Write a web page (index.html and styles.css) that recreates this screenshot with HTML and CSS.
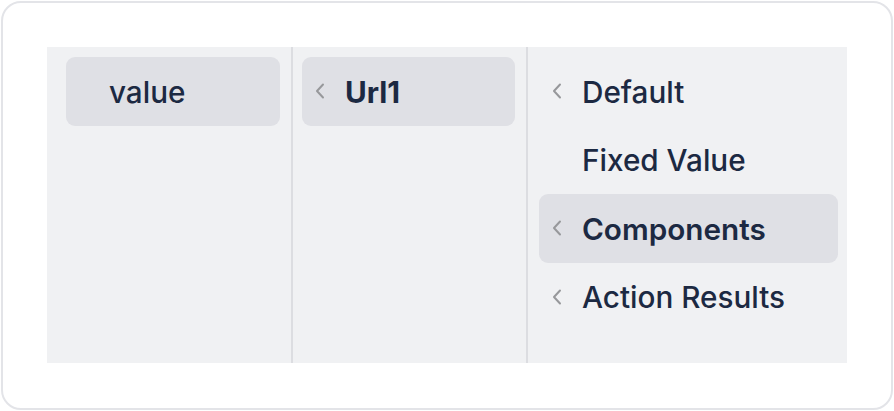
FILE: index.html
```html
<!DOCTYPE html>
<html>
<head>
<meta charset="utf-8">
<link rel="stylesheet" href="styles.css">
</head>
<body>
<div class="card">
  <div class="panel">
    <div class="col col1">
      <div class="item active"><span class="label">value</span></div>
    </div>
    <div class="col col2">
      <div class="item active"><span class="chev"><svg viewBox="0 0 12 18" width="12" height="18"><path d="M9 2.5 L3 9 L9 15.5" fill="none" stroke="currentColor" stroke-width="2" stroke-linecap="round" stroke-linejoin="round"/></svg></span><span class="label heavy">Url1</span></div>
    </div>
    <div class="col col3">
      <div class="item"><span class="chev"><svg viewBox="0 0 12 18" width="12" height="18"><path d="M9 2.5 L3 9 L9 15.5" fill="none" stroke="currentColor" stroke-width="2" stroke-linecap="round" stroke-linejoin="round"/></svg></span><span class="label">Default</span></div>
      <div class="item"><span class="label">Fixed Value</span></div>
      <div class="item active"><span class="chev"><svg viewBox="0 0 12 18" width="12" height="18"><path d="M9 2.5 L3 9 L9 15.5" fill="none" stroke="currentColor" stroke-width="2" stroke-linecap="round" stroke-linejoin="round"/></svg></span><span class="label bold">Components</span></div>
      <div class="item"><span class="chev"><svg viewBox="0 0 12 18" width="12" height="18"><path d="M9 2.5 L3 9 L9 15.5" fill="none" stroke="currentColor" stroke-width="2" stroke-linecap="round" stroke-linejoin="round"/></svg></span><span class="label">Action Results</span></div>
    </div>
  </div>
</div>
</body>
</html>
```
FILE: styles.css
```css
html, body {
  margin: 0;
  padding: 0;
  background: #ffffff;
}
body {
  width: 894px;
  height: 411px;
  padding: 1px;
  box-sizing: border-box;
  font-family: Inter, "Noto Sans", sans-serif;
}
.card {
  width: 892px;
  height: 409px;
  box-sizing: border-box;
  border: 2px solid #e3e4e8;
  border-radius: 20px;
  padding: 44px 44px 45px 44px;
  background: #ffffff;
}
.panel {
  display: flex;
  height: 316px;
  background: #f0f1f3;
}
.col {
  box-sizing: border-box;
  padding-top: 10px;
  display: flex;
  flex-direction: column;
}
.col1 {
  width: 246px;
  padding-left: 19px;
  padding-right: 11px;
  border-right: 2px solid #dcdde1;
}
.col2 {
  width: 235px;
  padding-left: 9px;
  padding-right: 11px;
  border-right: 2px solid #dcdde1;
}
.col3 {
  width: 319px;
  padding-left: 11px;
  padding-right: 9px;
}
.item {
  height: 68.5px;
  flex: none;
  display: flex;
  align-items: center;
  position: relative;
  border-radius: 9px;
  padding-left: 43px;
  color: #1c2942;
  font-size: 29.7px;
  font-weight: 500;
}
.item.active {
  background: #dfe0e5;
}
.chev {
  position: absolute;
  left: 12px;
  top: 25px;
  width: 12px;
  height: 18px;
  color: #97989b;
  display: flex;
}
.label {
  line-height: 1;
  position: relative;
  top: 1.5px;
}
.bold {
  font-weight: 600;
}
.heavy {
  font-weight: 700;
}
```
